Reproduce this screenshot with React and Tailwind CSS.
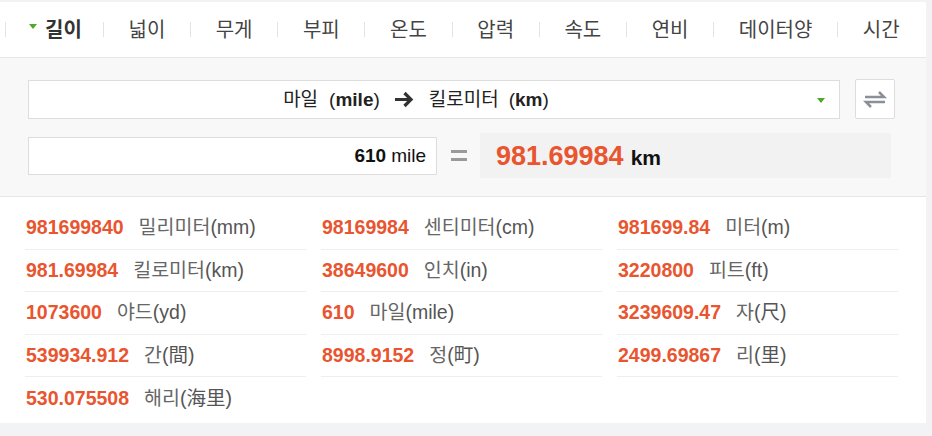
import React from "react";

const TABS = ["길이", "넓이", "무게", "부피", "온도", "압력", "속도", "연비", "데이터양", "시간"];

const RESULTS = [
  { value: "981699840", name: "밀리미터", unit: "(mm)" },
  { value: "98169984", name: "센티미터", unit: "(cm)" },
  { value: "981699.84", name: "미터", unit: "(m)" },
  { value: "981.69984", name: "킬로미터", unit: "(km)" },
  { value: "38649600", name: "인치", unit: "(in)" },
  { value: "3220800", name: "피트", unit: "(ft)" },
  { value: "1073600", name: "야드", unit: "(yd)" },
  { value: "610", name: "마일", unit: "(mile)" },
  { value: "3239609.47", name: "자", unit: "(尺)" },
  { value: "539934.912", name: "간", unit: "(間)" },
  { value: "8998.9152", name: "정", unit: "(町)" },
  { value: "2499.69867", name: "리", unit: "(里)" },
  { value: "530.075508", name: "해리", unit: "(海里)" },
];

const FONT = { fontFamily: '"Liberation Sans", "Noto Sans CJK KR", sans-serif' };

function GreenCaret({ className }) {
  return (
    <svg width="8" height="5" viewBox="0 0 8 5" className={className}>
      <path d="M0 0 H8 L4 5 Z" fill="#4ea82a" />
    </svg>
  );
}

export default function App() {
  return (
    <div className="w-[932px] h-[436px] bg-[#f2f3f5] pt-[2px] overflow-hidden" style={FONT}>
      <div className="w-[926px] bg-white">
        {/* tabs */}
        <div className="h-[56px] flex items-center border-b border-[#e6e6e6] pl-[5px]">
          {TABS.map((t, i) => (
            <div key={t} className="flex items-center">
              <span className="w-px h-[15px] bg-[#e3e3e3]" />
              {i === 0 ? (
                <div className="flex items-center gap-[8px] pl-[23px] pr-[21px]">
                  <GreenCaret className="-mt-[7px]" />
                  <span className="text-[20px] leading-none font-bold text-[#333]">{t}</span>
                </div>
              ) : (
                <span className="px-[24.7px] text-[20px] leading-none text-[#444]">{t}</span>
              )}
            </div>
          ))}
        </div>

        {/* converter */}
        <div className="h-[139px] bg-[#f8f8f8] border-b border-[#e6e6e6] pl-[28px] pt-[21px]">
          <div className="flex items-center">
            <div className="relative w-[812px] h-[39px] bg-white border border-[#dddddd] flex items-center justify-center pr-[36px] text-[19px] text-[#222] leading-none">
              <span>마일</span>
              <span className="ml-[11px]">
                (<b>mile</b>)
              </span>
              <svg width="21" height="17" viewBox="0 0 21 17" className="mx-[14px]">
                <path d="M1 8.5 H17 M10.5 2 L17 8.5 L10.5 15" stroke="#333" strokeWidth="3.2" fill="none" />
              </svg>
              <span>킬로미터</span>
              <span className="ml-[10px]">
                (<b>km</b>)
              </span>
              <GreenCaret className="absolute right-[14px] top-[17px]" />
            </div>
            <div className="ml-[15px] w-[40px] h-[40px] bg-white border border-[#dddddd] rounded-[2px] flex items-center justify-center">
              <svg width="24" height="20" viewBox="0 0 24 20">
                <path d="M2 8 H21 L16 3" stroke="#8b8f98" strokeWidth="2.5" fill="none" />
                <path d="M22 13 H3 L8 18" stroke="#8b8f98" strokeWidth="2.5" fill="none" />
              </svg>
            </div>
          </div>

          <div className="flex items-center mt-[14px]">
            <div className="w-[409px] h-[38px] bg-white border border-[#dddddd] flex items-center justify-end pr-[10px] text-[19px] text-[#111] leading-none">
              <b>610</b>
              <span className="ml-[5px]">mile</span>
            </div>
            <div className="w-[43px] flex flex-col items-center gap-[5px]">
              <span className="w-[16px] h-[3px] bg-[#9a9a9a]" />
              <span className="w-[16px] h-[3px] bg-[#9a9a9a]" />
            </div>
            <div className="w-[411px] h-[45px] bg-[#f2f2f2] flex items-baseline pl-[16px] pt-[10px] leading-none">
              <span className="text-[27px] font-bold text-[#e8552f]">981.69984</span>
              <span className="ml-[7px] text-[21px] font-bold text-[#111]">km</span>
            </div>
          </div>
        </div>

        {/* results list */}
        <div className="h-[226px] pl-[25px] pt-[10px] grid grid-cols-[281px_281px_281px] gap-x-[15px] content-start">
          {RESULTS.map((r, i) => (
            <div
              key={r.value}
              className={
                "h-[42.6px] flex items-center pl-[1px] text-[19.5px] leading-none " +
                (i === RESULTS.length - 1 ? "" : "border-b border-[#eeeeee]")
              }
            >
              <span className="font-bold text-[#e8552f]">{r.value}</span>
              <span className="ml-[15px] text-[#666]">
                {r.name}
                <span className="text-[#555]">{r.unit}</span>
              </span>
            </div>
          ))}
        </div>
      </div>
    </div>
  );
}
